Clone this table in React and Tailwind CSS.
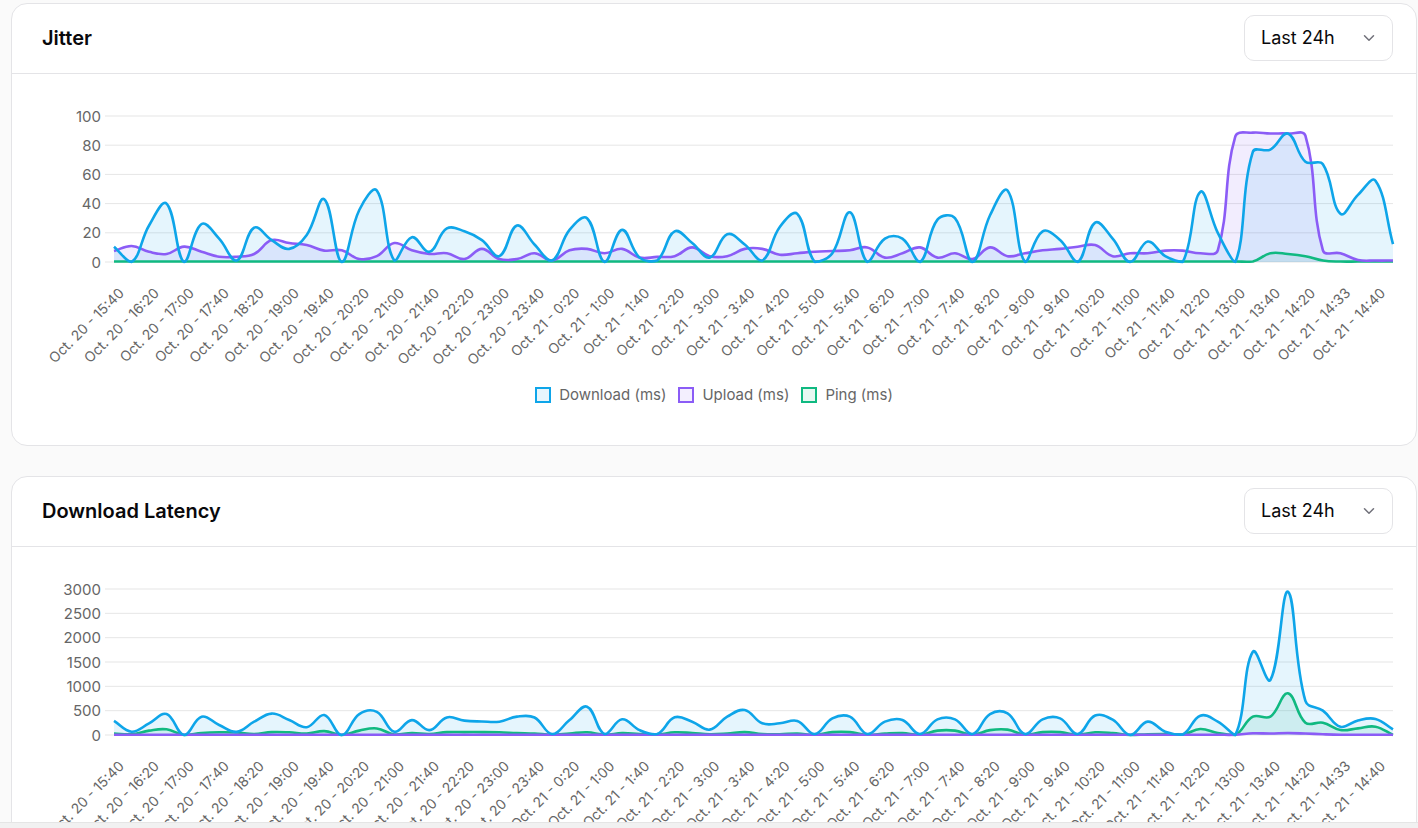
import { ChevronDown } from 'lucide-react';

const W = 1404;
const XL = 102;
const XR = 1381;
const YT = 42;
const YB = 188;

const COLORS = {
  download: { line: '#0ea5e9', fill: 'rgba(14,165,233,0.11)', box: 'border-[#0ea5e9] bg-[#e7f6fd]' },
  upload: { line: '#8b5cf6', fill: 'rgba(139,92,246,0.11)', box: 'border-[#8b5cf6] bg-[#f3effe]' },
  ping: { line: '#10b981', fill: 'rgba(16,185,129,0.11)', box: 'border-[#10b981] bg-[#e7f8f2]' },
};

const day20 = ['15:40', '16:20', '17:00', '17:40', '18:20', '19:00', '19:40', '20:20', '21:00', '21:40', '22:20', '23:00', '23:40'];
const day21 = ['0:20', '1:00', '1:40', '2:20', '3:00', '3:40', '4:20', '5:00', '5:40', '6:20', '7:00', '7:40', '8:20', '9:00', '9:40', '10:20', '11:00', '11:40', '12:20', '13:00', '13:40', '14:20', '14:33', '14:40'];
const labels = [...day20.map(t => `Oct. 20 - ${t}`), ...day21.map(t => `Oct. 21 - ${t}`)];

const fill = (n, v, overrides = {}) => Array.from({ length: n }, (_, i) => (overrides[i] ?? v));

const jitter = {
  download: [10.5, 0, 25, 40, 0, 26, 16, 1, 23.5, 15, 9, 18.5, 43, 0, 35.6, 49, 1, 17, 7, 23, 21, 15, 4, 25, 12, 1, 22, 30, 0, 22, 3, 1, 21, 13, 3, 19, 12, 1, 24, 33, 0, 6, 34, 0, 16, 16, 0, 29, 30, 0, 32, 49, 0, 21, 15, 0, 27, 16, 0, 14, 4, 0, 48, 20, 0, 75.5, 77, 88, 68.7, 67, 33, 46, 55.7, 12.3],
  upload: [7.5, 11, 7, 5.5, 10.5, 7, 3.6, 3.6, 5.5, 15, 13, 11.6, 7.8, 8, 2, 4, 13, 8, 5.5, 6, 2, 9, 2, 2, 6, 1, 8, 9, 6, 9, 3, 3.5, 4, 10, 4, 4, 9, 9, 5, 6, 7, 7.5, 8, 10, 3, 6, 10, 3, 6, 2, 10, 4, 6, 8, 9, 10.5, 11.6, 4, 6, 6, 7.8, 7.8, 6, 8, 86, 88.6, 88, 88, 86.5, 8, 6, 1.4, 1, 1],
  ping: fill(74, 0.3, { 66: 6, 67: 5.5, 68: 4, 69: 1 }),
};

const latency = {
  download: [288, 68, 240, 431, 0, 377, 205, 65, 273, 440, 308, 160, 411, 0, 430, 475, 65, 305, 100, 362, 295, 278, 274, 377, 360, 20, 308, 582, 20, 322, 100, 20, 363, 274, 110, 377, 514, 240, 240, 288, 20, 342, 377, 20, 274, 308, 20, 322, 322, 20, 431, 445, 20, 322, 342, 20, 400, 315, 0, 274, 68, 10, 397, 274, 0, 1712, 1130, 2945, 700, 500, 170, 300, 330, 117],
  upload: fill(74, 5, { 65: 35, 66: 30, 67: 40, 68: 30, 69: 15 }),
  ping: [30, 15, 90, 117, 0, 40, 55, 50, 20, 60, 55, 30, 80, 0, 90, 135, 10, 40, 20, 60, 60, 60, 55, 40, 30, 5, 30, 55, 5, 40, 20, 10, 55, 40, 15, 30, 60, 20, 15, 30, 5, 60, 60, 5, 30, 40, 5, 90, 90, 5, 100, 110, 5, 60, 60, 5, 55, 40, 0, 15, 20, 10, 123, 40, 0, 377, 377, 856, 253, 253, 103, 137, 171, 0],
};

const clamp = (v, a, b) => Math.min(Math.max(v, a), b);

// same spline as chart.js (tension 0.4, control points kept inside the chart area)
const splinePath = (pts) => {
  const t = 0.4;
  const cps = pts.map((p, i) => {
    const prev = pts[i - 1] || p;
    const next = pts[i + 1] || p;
    const d01 = Math.hypot(p.x - prev.x, p.y - prev.y);
    const d12 = Math.hypot(next.x - p.x, next.y - p.y);
    const s01 = d01 + d12 === 0 ? 0 : d01 / (d01 + d12);
    const s12 = d01 + d12 === 0 ? 0 : d12 / (d01 + d12);
    return {
      px: clamp(p.x - t * s01 * (next.x - prev.x), XL, XR),
      py: clamp(p.y - t * s01 * (next.y - prev.y), YT, YB),
      nx: clamp(p.x + t * s12 * (next.x - prev.x), XL, XR),
      ny: clamp(p.y + t * s12 * (next.y - prev.y), YT, YB),
    };
  });
  let d = `M${pts[0].x},${pts[0].y}`;
  for (let i = 1; i < pts.length; i++) {
    d += ` C${cps[i - 1].nx},${cps[i - 1].ny} ${cps[i].px},${cps[i].py} ${pts[i].x},${pts[i].y}`;
  }
  return d;
};

const LineChart = ({ data, max, step }) => {
  const n = data.download.length;
  const dx = (XR - XL) / (n - 1);
  const toPts = (vals) => vals.map((v, i) => ({ x: XL + i * dx, y: YB - (v / max) * (YB - YT) }));
  const ticks = [];
  for (let v = 0; v <= max; v += step) ticks.push(v);
  const order = ['ping', 'upload', 'download'];
  const paths = order.map(key => ({ key, d: splinePath(toPts(data[key])) }));

  return (
    <svg width={W} height={305} className="block" style={{ fontFamily: 'Inter, sans-serif' }}>
      {ticks.map(v => {
        const y = YB - (v / max) * (YB - YT);
        return (
          <g key={v}>
            <line x1={XL - 9} x2={XR} y1={y} y2={y} stroke="rgba(0,0,0,0.1)" strokeWidth="1" />
            <text x={XL - 13} y={y} textAnchor="end" dominantBaseline="central" fontSize="15" fill="#666">{v}</text>
          </g>
        );
      })}
      {paths.map(p => (
        <path key={p.key + '-fill'} d={`${p.d} L${XR},${YB} L${XL},${YB} Z`} fill={COLORS[p.key].fill} />
      ))}
      {paths.map(p => (
        <path key={p.key} d={p.d} fill="none" stroke={COLORS[p.key].line} strokeWidth="2.6" strokeLinejoin="round" />
      ))}
      {labels.map((l, i) => {
        const x = XL + i * 2 * dx + 7;
        const y = YB + 28;
        return (
          <text key={l} x={x} y={y} textAnchor="end" dominantBaseline="central" fontSize="14" fill="#666" transform={`rotate(-45 ${x} ${y})`}>{l}</text>
        );
      })}
    </svg>
  );
};

const Legend = () => (
  <div className="flex h-8 items-center justify-center gap-3 text-[15px] text-[#666]">
    {[['download', 'Download (ms)'], ['upload', 'Upload (ms)'], ['ping', 'Ping (ms)']].map(([key, label]) => (
      <div key={key} className="flex items-center gap-2">
        <span className={`h-4 w-4 border-2 ${COLORS[key].box}`} />
        <span>{label}</span>
      </div>
    ))}
  </div>
);

const ChartCard = ({ title, data, max, step, className = '' }) => (
  <div className={`w-[1406px] rounded-2xl border border-[#e4e4e7] bg-white ${className}`}>
    <div className="flex items-center justify-between border-b border-[#e4e4e7] pl-[30px] pr-[23px] pt-[11px] pb-3">
      <h2 className="text-xl font-semibold text-[#09090b]">{title}</h2>
      <button className="flex h-[46px] w-[149px] items-center justify-between rounded-[10px] border border-[#e4e4e7] bg-white pl-4 pr-[14px] text-lg text-[#09090b]">
        <span>Last 24h</span>
        <ChevronDown size={18} strokeWidth={2} className="text-[#71717a]" />
      </button>
    </div>
    <div className="h-[371px]">
      <LineChart data={data} max={max} step={step} />
      <Legend />
    </div>
  </div>
);

export default function App() {
  return (
    <div className="relative h-[828px] overflow-hidden bg-[#fafafa] pl-[11px] pt-[3px] font-['Inter',sans-serif]">
      <ChartCard title="Jitter" data={jitter} max={100} step={20} />
      <ChartCard title="Download Latency" data={latency} max={3000} step={500} className="mt-[30px]" />
      <div className="absolute bottom-0 left-0 right-0 h-[6px] border-t border-[#e5e5e5] bg-[#f1f1f1]" />
    </div>
  );
}
